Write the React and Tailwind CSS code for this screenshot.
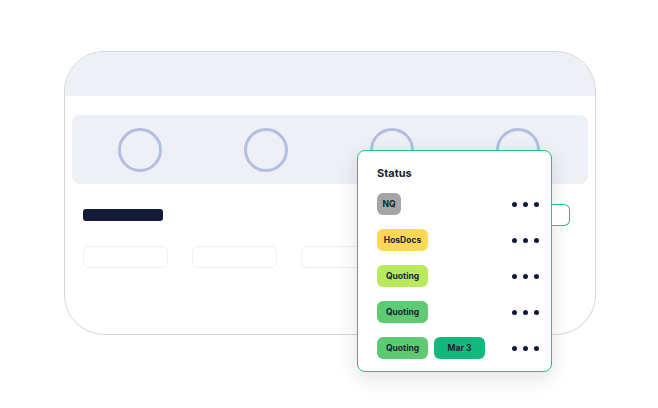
export default function App() {
  const rows = [
    [{ t: "NQ", w: "w-[24px]", c: "bg-[#a4a5a7]" }],
    [{ t: "HosDocs", w: "w-[51px]", c: "bg-[#fcd75a]" }],
    [{ t: "Quoting", w: "w-[51px]", c: "bg-[#b9ea5e]" }],
    [{ t: "Quoting", w: "w-[51px]", c: "bg-[#5ecb73]" }],
    [
      { t: "Quoting", w: "w-[51px]", c: "bg-[#5ecb73]" },
      { t: "Mar 3", w: "w-[51px]", c: "bg-[#13b87d]" },
    ],
  ];
  return (
    <div className="relative w-[658px] h-[408px] bg-white overflow-hidden" style={{ fontFamily: "Inter, 'Noto Sans', sans-serif" }}>
      <div className="ml-[64px] mt-[51px] w-[532px] h-[284px] border border-[#d3d5d9] rounded-[40px] overflow-hidden bg-white">
        <div className="h-[44px] bg-[#edf0f5]" />
        <div className="mx-[7px] mt-[19px] h-[69px] rounded-[8px] bg-[#edf0f5] flex items-center pl-[46px] gap-[82px]">
          {[0, 1, 2, 3].map((i) => (
            <div key={i} className="w-[44px] h-[44px] rounded-full border-[3px] border-[#b5bee2]" />
          ))}
        </div>
        <div className="ml-[18px] mt-[25px] w-[80px] h-[12px] rounded-[3px] bg-[#141b3a]" />
        <div className="ml-[18px] mt-[25px] flex gap-[24px]">
          {[0, 1, 2, 3].map((i) => (
            <div key={i} className="w-[85px] h-[22px] rounded-[6px] border border-[#efefef]" />
          ))}
        </div>
      </div>

      <div className="absolute left-[357px] top-[150px] w-[195px] h-[222px] rounded-[8px] border border-[#27bf85] bg-white shadow-[0_6px_20px_rgba(20,30,50,0.13)] pl-[19px] pr-[12px] pt-[15px]">
        <div className="absolute left-[194px] top-[53px] w-[18px] h-[22px] border border-l-0 border-[#27bf85] rounded-r-[6px] bg-white" />
        <div className="text-[11px] leading-[14px] font-bold text-[#1a1d33]">Status</div>
        <div className="mt-[13px] flex flex-col gap-[14px]">
          {rows.map((r, i) => (
            <div key={i} className="h-[22px] flex items-center justify-between">
              <div className="flex gap-[6px]">
                {r.map((b, j) => (
                  <div key={j} className={`${b.w} ${b.c} h-[22px] rounded-[6px] flex items-center justify-center text-[8.5px] font-bold text-[#18233a]`}>
                    {b.t}
                  </div>
                ))}
              </div>
              <div className="flex gap-[6px]">
                <div className="w-[5px] h-[5px] rounded-full bg-[#111a3b]" />
                <div className="w-[5px] h-[5px] rounded-full bg-[#111a3b]" />
                <div className="w-[5px] h-[5px] rounded-full bg-[#111a3b]" />
              </div>
            </div>
          ))}
        </div>
      </div>
    </div>
  );
}
